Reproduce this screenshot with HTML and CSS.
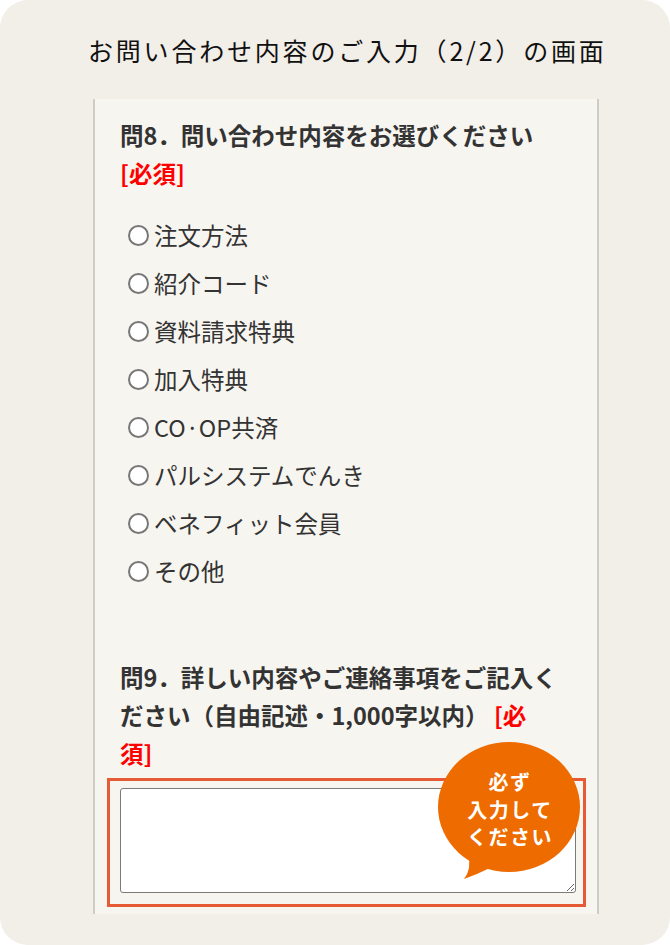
FILE: index.html
```html
<!DOCTYPE html>
<html lang="ja">
<head>
<meta charset="utf-8">
<title>お問い合わせ内容のご入力（2/2）の画面</title>
<link rel="stylesheet" href="styles.css">
</head>
<body>
<div class="card">
  <h1 class="title">お問い合わせ内容のご入力（2/2）の画面</h1>
  <div class="panel">
    <h2 class="q">問8．問い合わせ内容をお選びください<br><span class="req">[必須]</span></h2>
    <ul class="options">
      <li><span class="radio"></span>注文方法</li>
      <li><span class="radio"></span>紹介コード</li>
      <li><span class="radio"></span>資料請求特典</li>
      <li><span class="radio"></span>加入特典</li>
      <li><span class="radio"></span>CO·OP共済</li>
      <li><span class="radio"></span>パルシステムでんき</li>
      <li><span class="radio"></span>ベネフィット会員</li>
      <li><span class="radio"></span>その他</li>
    </ul>
    <h2 class="q q9">問9．詳しい内容やご連絡事項をご記入く<br>ださい（自由記述・1,000字以内） <span class="req">[必<br>須]</span></h2>
    <div class="field">
      <textarea class="ta"></textarea>
      <svg class="bubble" width="146" height="140" viewBox="0 0 146 140">
        <ellipse cx="71" cy="66" rx="71" ry="65" fill="#ee6b00"/>
        <path d="M30 112 Q34 128 26 138 Q40 133 54 126 Z" fill="#ee6b00"/>
        <text x="72" y="49" class="bt">必ず</text>
        <text x="72" y="77" class="bt">入力して</text>
        <text x="72" y="104" class="bt">ください</text>
      </svg>
    </div>
  </div>
</div>
</body>
</html>
```
FILE: styles.css
```css
html, body {
  margin: 0;
  padding: 0;
  background: #ffffff;
}
.card {
  width: 670px;
  height: 945px;
  box-sizing: border-box;
  background: #f2eee8;
  border-radius: 28px;
  overflow: hidden;
  padding-top: 32px;
}
.title {
  margin: 0 0 31px 0;
  padding-left: 88px;
  font-family: "Noto Sans CJK JP", sans-serif;
  font-weight: 400;
  font-size: 25px;
  line-height: 36px;
  letter-spacing: 2.8px;
  color: #111111;
  white-space: nowrap;
}
.panel {
  margin-left: 93px;
  width: 506px;
  height: 815px;
  box-sizing: border-box;
  background: #f7f5f0;
  border-left: 2px solid #cfcbc6;
  border-right: 2px solid #cfcbc6;
  padding: 17px 21px 0 25px;
  font-family: "Noto Sans CJK JP", sans-serif;
  color: #333333;
}
.q {
  margin: 0;
  font-size: 23.5px;
  font-weight: 700;
  line-height: 38px;
  white-space: nowrap;
}
.req {
  color: #ff0000;
}
.options {
  list-style: none;
  margin: 19px 0 0 0;
  padding: 0;
}
.options li {
  display: flex;
  align-items: center;
  height: 48px;
  font-size: 23.5px;
  color: #333333;
}
.radio {
  display: block;
  width: 21px;
  height: 21px;
  min-width: 21px;
  box-sizing: border-box;
  border: 2px solid #777777;
  border-radius: 50%;
  background: #ffffff;
  margin-left: 8px;
  margin-right: 5px;
  flex: none;
}
.q9 {
  margin-top: 63px;
}
.field {
  position: relative;
  margin: 6px 0 0 -13px;
  width: 479px;
  box-sizing: border-box;
  border: 3px solid #e65a36;
  padding: 7px 7px 11px 10px;
}
.ta {
  display: block;
  width: 456px;
  height: 105px;
  box-sizing: border-box;
  margin: 0;
  border: 1.5px solid #7a7a7a;
  border-radius: 3px;
  background: #ffffff;
}
.bubble {
  position: absolute;
  left: 328px;
  top: -40px;
}
.bt {
  font-family: "Noto Sans CJK JP", sans-serif;
  font-weight: 700;
  font-size: 20px;
  letter-spacing: 1.5px;
  fill: #ffffff;
  text-anchor: middle;
}
```
